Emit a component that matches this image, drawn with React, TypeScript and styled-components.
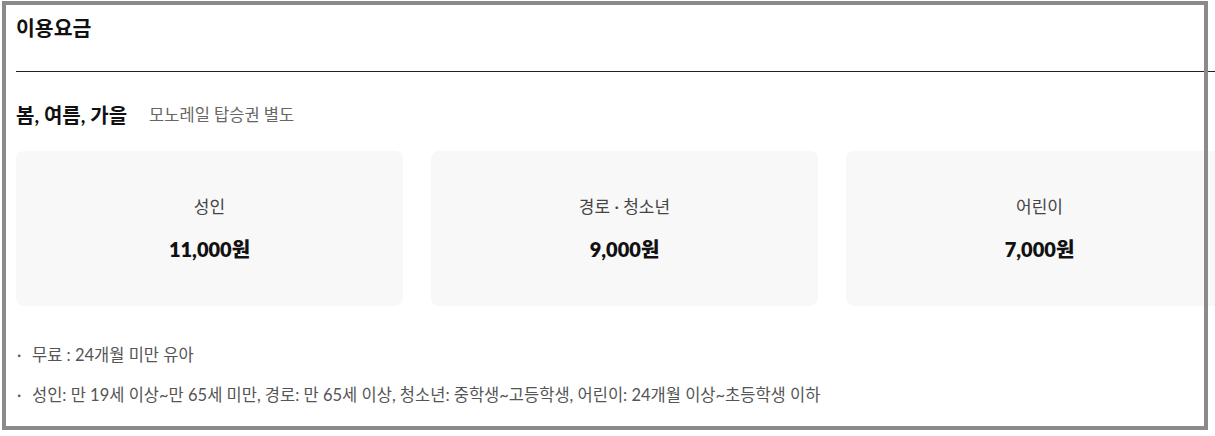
import React from 'react';
import styled, { createGlobalStyle } from 'styled-components';

const GlobalStyle = createGlobalStyle`
  html, body {
    margin: 0;
    padding: 0;
    background: #fff;
    overflow: hidden;
  }
  body {
    font-family: Lato, "Noto Sans CJK KR", "Noto Sans", sans-serif;
    color: #222;
  }
`;

const Page = styled.div`
  position: relative;
  width: 1215px;
  height: 436px;
  overflow: hidden;
`;

// gray capture frame laid over the content
const Frame = styled.div`
  position: absolute;
  left: 2px;
  top: 1px;
  width: 1206px;
  height: 429px;
  box-sizing: border-box;
  border: 4px solid #8a8a8a;
  pointer-events: none;
`;

const Section = styled.section`
  width: 1217px;
  padding-left: 16px;
`;

const Header = styled.div`
  height: 56px;
  padding-top: 15px;
  border-bottom: 1px solid #222;
`;

const Title = styled.h2`
  margin: 0;
  font-size: 20.5px;
  font-weight: 700;
  line-height: 26px;
  color: #111;
`;

const SubHeader = styled.div`
  display: flex;
  align-items: center;
  gap: 22px;
  margin-top: 30px;
  height: 26px;
`;

const Season = styled.h3`
  margin: 0;
  font-size: 20px;
  font-weight: 700;
  line-height: 26px;
  color: #111;
`;

const Note = styled.span`
  font-size: 16.5px;
  line-height: 22px;
  color: #666;
`;

const CardRow = styled.div`
  display: grid;
  grid-template-columns: repeat(3, 387px);
  gap: 28px;
  margin-top: 23px;
`;

const Card = styled.div`
  height: 155px;
  border-radius: 8px;
  background: #f8f8f9;
  display: flex;
  flex-direction: column;
  align-items: center;
  justify-content: center;
  gap: 18px;
`;

const Label = styled.div`
  font-size: 17px;
  line-height: 22px;
  color: #444;
`;

const Price = styled.div`
  font-size: 20px;
  font-weight: 800;
  line-height: 26px;
  color: #111;
`;

const Notes = styled.ul`
  list-style: none;
  margin: 37px 0 0;
  padding: 0;
  display: flex;
  flex-direction: column;
  gap: 16px;
`;

const NoteItem = styled.li`
  display: flex;
  font-size: 16.5px;
  line-height: 24px;
  color: #555;
`;

const Dot = styled.span`
  width: 15px;
  flex: none;
  padding-left: 1px;
`;

const prices = [
  { label: '성인', price: '11,000원' },
  { label: '경로 · 청소년', price: '9,000원' },
  { label: '어린이', price: '7,000원' },
];

const notes = [
  '무료 : 24개월 미만 유아',
  '성인: 만 19세 이상~만 65세 미만, 경로: 만 65세 이상, 청소년: 중학생~고등학생, 어린이: 24개월 이상~초등학생 이하',
];

const App = (): React.ReactElement => (
  <Page>
    <GlobalStyle />
    <Section>
      <Header>
        <Title>이용요금</Title>
      </Header>
      <SubHeader>
        <Season>봄, 여름, 가을</Season>
        <Note>모노레일 탑승권 별도</Note>
      </SubHeader>
      <CardRow>
        {prices.map(({ label, price }) => (
          <Card key={label}>
            <Label>{label}</Label>
            <Price>{price}</Price>
          </Card>
        ))}
      </CardRow>
      <Notes>
        {notes.map((text) => (
          <NoteItem key={text}>
            <Dot>·</Dot>
            {text}
          </NoteItem>
        ))}
      </Notes>
    </Section>
    <Frame />
  </Page>
);

export default App;
